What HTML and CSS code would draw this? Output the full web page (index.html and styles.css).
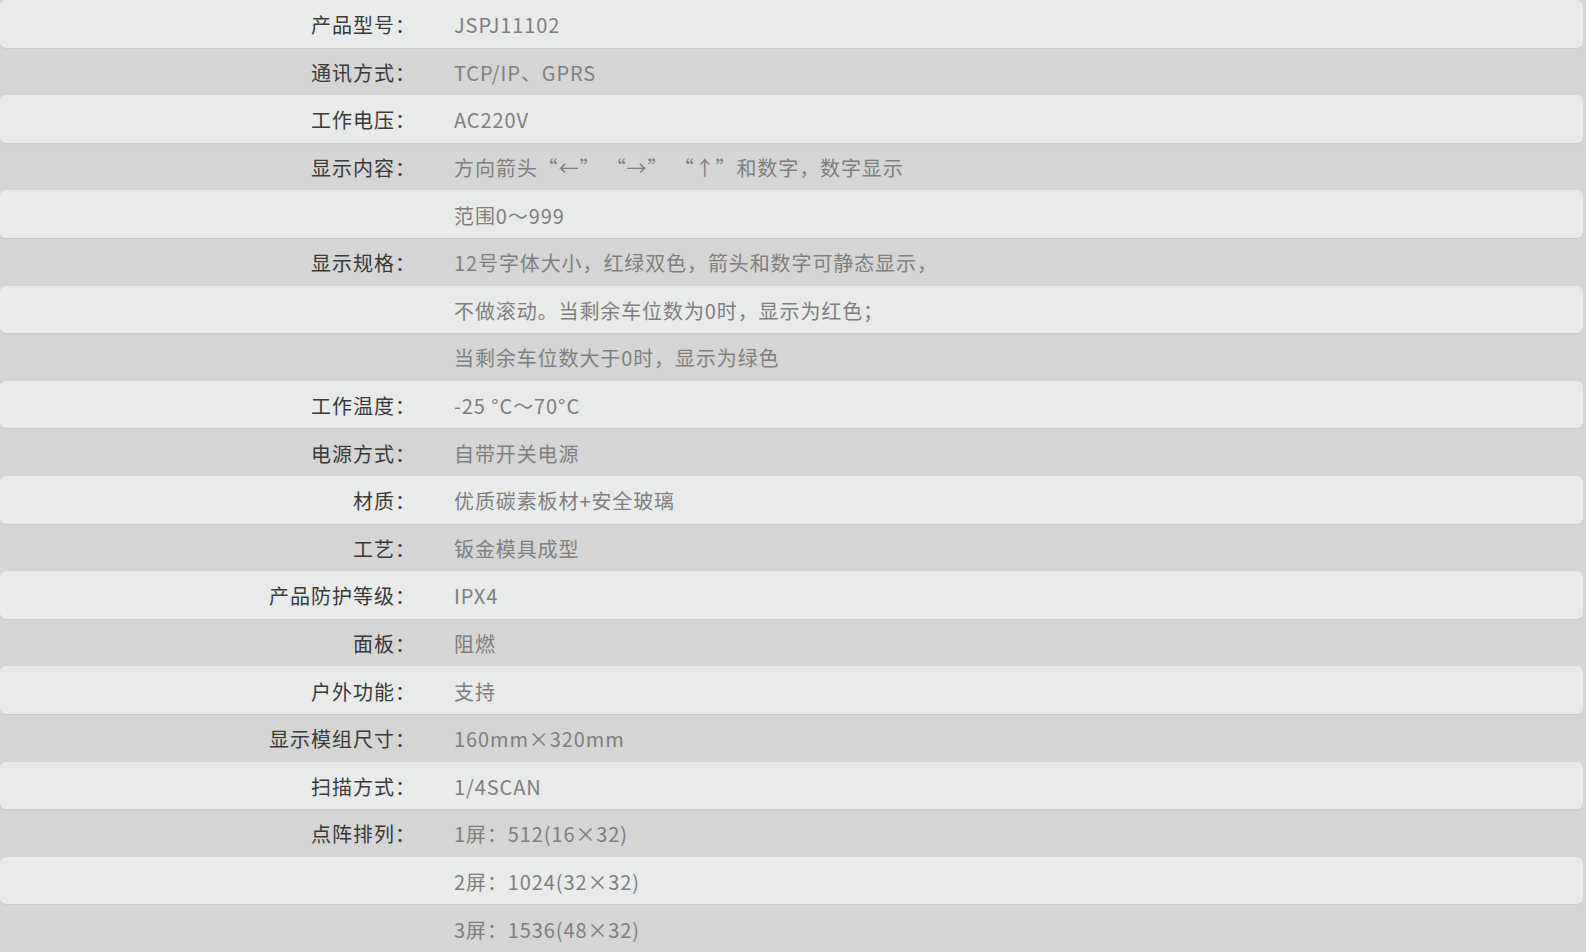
FILE: index.html
```html
<!DOCTYPE html>
<html lang="zh-CN">
<head>
<meta charset="utf-8">
<title>产品参数</title>
<link rel="stylesheet" href="styles.css">
</head>
<body>
<div class="spec">
  <div class="row light"><div class="label">产品型号：</div><div class="value">JSPJ11102</div></div>
  <div class="row dark"><div class="label">通讯方式：</div><div class="value">TCP/IP、GPRS</div></div>
  <div class="row light"><div class="label">工作电压：</div><div class="value">AC220V</div></div>
  <div class="row dark"><div class="label">显示内容：</div><div class="value">方向箭头“←” “→” “↑”和数字，数字显示</div></div>
  <div class="row light"><div class="label"></div><div class="value">范围0～999</div></div>
  <div class="row dark"><div class="label">显示规格：</div><div class="value">12号字体大小，红绿双色，箭头和数字可静态显示，</div></div>
  <div class="row light"><div class="label"></div><div class="value">不做滚动。当剩余车位数为0时，显示为红色；</div></div>
  <div class="row dark"><div class="label"></div><div class="value">当剩余车位数大于0时，显示为绿色</div></div>
  <div class="row light"><div class="label">工作温度：</div><div class="value">-25 °C～70°C</div></div>
  <div class="row dark"><div class="label">电源方式：</div><div class="value">自带开关电源</div></div>
  <div class="row light"><div class="label">材质：</div><div class="value">优质碳素板材+安全玻璃</div></div>
  <div class="row dark"><div class="label">工艺：</div><div class="value">钣金模具成型</div></div>
  <div class="row light"><div class="label">产品防护等级：</div><div class="value">IPX4</div></div>
  <div class="row dark"><div class="label">面板：</div><div class="value">阻燃</div></div>
  <div class="row light"><div class="label">户外功能：</div><div class="value">支持</div></div>
  <div class="row dark"><div class="label">显示模组尺寸：</div><div class="value">160mm×320mm</div></div>
  <div class="row light"><div class="label">扫描方式：</div><div class="value">1/4SCAN</div></div>
  <div class="row dark"><div class="label">点阵排列：</div><div class="value">1屏：512(16×32)</div></div>
  <div class="row light"><div class="label"></div><div class="value">2屏：1024(32×32)</div></div>
  <div class="row dark"><div class="label"></div><div class="value">3屏：1536(48×32)</div></div>
</div>
</body>
</html>
```

FILE: styles.css
```css
html, body {
  margin: 0;
  padding: 0;
  background: #d4d5d4;
}
body {
  font-family: "Noto Sans CJK SC", "Noto Sans", sans-serif;
  font-size: 20px;
  letter-spacing: 1px;
  overflow: hidden;
}
.spec {
  display: flex;
  flex-direction: column;
}
.row {
  height: 47.6px;
  display: flex;
  align-items: center;
  box-sizing: border-box;
  padding-top: 2px;
}
.row.light {
  background: #e9eaea;
  margin-right: 3px;
  border-radius: 6px;
  box-shadow: 0 1px 1px rgba(0, 0, 0, 0.05);
}
.label {
  width: 416px;
  flex: 0 0 416px;
  text-align: right;
  color: #3a3a3a;
  white-space: nowrap;
}
.value {
  padding-left: 38px;
  color: #7f7f7f;
  white-space: nowrap;
  letter-spacing: 0.9px;
}
```
